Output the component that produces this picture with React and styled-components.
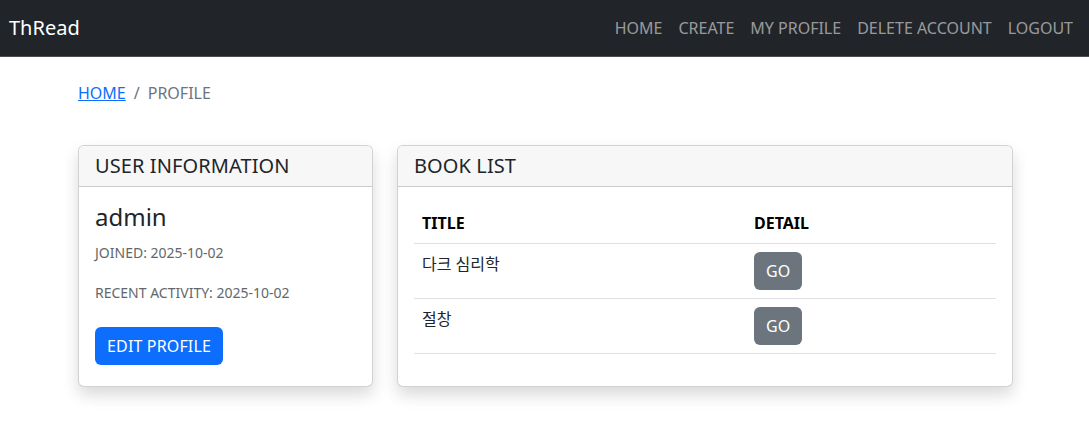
import React from "react";
import styled, { createGlobalStyle } from "styled-components";

const GlobalStyle = createGlobalStyle`
    body {
        margin: 0;
        background: #fff;
        font-family: "Noto Sans", "Noto Sans CJK KR", sans-serif;
        font-size: 16px;
        line-height: 1.5;
        color: #212529;
    }
    * { box-sizing: border-box; }
`;

const Navbar = styled.nav`
    height: 57px;
    background: #212529;
    border-bottom: 1px solid #4b4f53;
    display: flex;
    align-items: center;
    justify-content: space-between;
    padding: 0 8px 0 9px;
`;

const Brand = styled.a`
    color: #fff;
    font-size: 20px;
    text-decoration: none;
`;

const NavLinks = styled.div`
    display: flex;
`;

const NavLink = styled.a`
    color: rgba(255, 255, 255, 0.55);
    padding: 0 8px;
    text-decoration: none;
`;

const Container = styled.main`
    width: 935px;
    margin-left: 78px;
    padding: 24px 0 48px;
`;

const Breadcrumb = styled.ol`
    display: flex;
    list-style: none;
    margin: 0 0 40px;
    padding: 0;
    color: #6c757d;
`;

const Crumb = styled.li`
    & + &::before {
        content: "/";
        padding: 0 8px;
        color: #6c757d;
    }
    a {
        color: #0d6efd;
        text-decoration: underline;
    }
`;

const Row = styled.div`
    display: grid;
    grid-template-columns: 295px 616px;
    gap: 24px;
    align-items: stretch;
`;

const Card = styled.section`
    border: 1px solid rgba(0, 0, 0, 0.175);
    border-radius: 6px;
    background: #fff;
    box-shadow: 0 8px 16px rgba(0, 0, 0, 0.15);
    overflow: hidden;
    display: flex;
    flex-direction: column;
`;

const CardHeader = styled.h5`
    margin: 0;
    padding: 8px 16px;
    font-size: 20px;
    font-weight: 400;
    line-height: 24px;
    letter-spacing: 0.1px;
    background: #f7f7f7;
    border-bottom: 1px solid rgba(0, 0, 0, 0.175);
`;

const CardBody = styled.div`
    padding: 16px;
    flex: 1;
`;

const UserName = styled.h4`
    margin: 0 0 8px;
    font-size: 24px;
    font-weight: 400;
    line-height: 1.2;
`;

const Meta = styled.p`
    margin: 0 0 16px;
    small {
        font-size: 14px;
        color: #62676c;
    }
`;

const Button = styled.button`
    font-family: inherit;
    font-size: 16px;
    line-height: 24px;
    border: none;
    border-radius: 6px;
    color: #fff;
    padding: 7px 12px;
    letter-spacing: 0.15px;
    background: ${(p) => (p.$variant === "secondary" ? "#6c757d" : "#0d6efd")};
    margin-top: ${(p) => p.$offset || 0}px;
`;

const Table = styled.table`
    width: 100%;
    margin-bottom: 16px;
    border-collapse: collapse;
    th, td {
        padding: 8px;
        text-align: left;
        vertical-align: top;
        border-bottom: 1px solid #dee2e6;
    }
    th {
        font-weight: 700;
        color: #000;
    }
    th:first-child {
        width: 332px;
    }
`;

const books = ["다크 심리학", "절창"];

export default function App() {
    return (
        <>
            <GlobalStyle />
            <Navbar>
                <Brand>ThRead</Brand>
                <NavLinks>
                    <NavLink>HOME</NavLink>
                    <NavLink>CREATE</NavLink>
                    <NavLink>MY PROFILE</NavLink>
                    <NavLink>DELETE ACCOUNT</NavLink>
                    <NavLink>LOGOUT</NavLink>
                </NavLinks>
            </Navbar>
            <Container>
                <Breadcrumb>
                    <Crumb><a href="#">HOME</a></Crumb>
                    <Crumb>PROFILE</Crumb>
                </Breadcrumb>
                <Row>
                    <Card>
                        <CardHeader>USER INFORMATION</CardHeader>
                        <CardBody>
                            <UserName>admin</UserName>
                            <Meta><small>JOINED: 2025-10-02</small></Meta>
                            <Meta><small>RECENT ACTIVITY: 2025-10-02</small></Meta>
                            <Button $offset={7}>EDIT PROFILE</Button>
                        </CardBody>
                    </Card>
                    <Card>
                        <CardHeader>BOOK LIST</CardHeader>
                        <CardBody>
                            <Table>
                                <thead>
                                    <tr>
                                        <th>TITLE</th>
                                        <th>DETAIL</th>
                                    </tr>
                                </thead>
                                <tbody>
                                    {books.map((b) => (
                                        <tr key={b}>
                                            <td>{b}</td>
                                            <td><Button $variant="secondary">GO</Button></td>
                                        </tr>
                                    ))}
                                </tbody>
                            </Table>
                        </CardBody>
                    </Card>
                </Row>
            </Container>
        </>
    );
}
